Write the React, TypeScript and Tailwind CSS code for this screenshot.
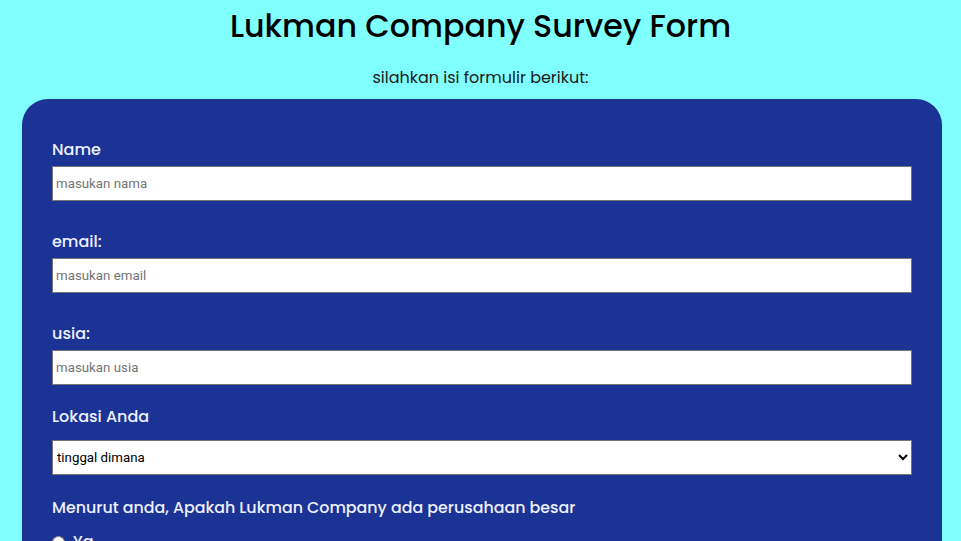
export default function App() {
  const fields = [
    { label: "Name", placeholder: "masukan nama" },
    { label: "email:", placeholder: "masukan email" },
    { label: "usia:", placeholder: "masukan usia" },
  ];

  return (
    <div className="min-h-screen bg-[#80ffff] font-['Poppins','Inter',sans-serif] text-black">
      <h1 className="pt-[6px] text-center text-[31.7px] font-medium leading-[40px]">
        Lukman Company Survey Form
      </h1>
      <p className="mt-[20px] text-center text-[16px] leading-[24px] text-[#1a1a1a]">
        silahkan isi formulir berikut:
      </p>
      <form className="ml-[22px] mr-[19px] mt-[9px] rounded-t-[26px] bg-[#1b3394] px-[30px] pt-[39px] pb-[40px] text-[#eef0ff]">
        {fields.map((f, i) => (
          <div key={f.label} className={i > 0 ? "mt-[29px]" : ""}>
            <label className="block text-[16px] font-medium leading-[24px]">{f.label}</label>
            <input
              type="text"
              placeholder={f.placeholder}
              className="mt-[4px] block h-[35px] w-full border border-[#767676] bg-white px-[3px] font-['Roboto',sans-serif] text-[13.3px] text-black placeholder:text-[#757575] outline-none"
            />
          </div>
        ))}
        <div className="mt-[20px]">
          <label className="block text-[16px] font-medium leading-[24px]">Lokasi Anda</label>
          <select className="mt-[11px] block h-[35px] w-full border border-[#767676] bg-white font-['Roboto',sans-serif] text-[13.3px] text-black">
            <option>tinggal dimana</option>
            <option>Jakarta</option>
            <option>Bandung</option>
            <option>Surabaya</option>
          </select>
        </div>
        <p className="mt-[21px] text-[15.85px] font-medium leading-[24px]">
          Menurut anda, Apakah Lukman Company ada perusahaan besar
        </p>
        <div className="mt-[10px] flex flex-col gap-2 text-[16px] font-medium">
          <label className="flex items-center gap-2">
            <input type="radio" name="besar" />
            Ya
          </label>
          <label className="flex items-center gap-2">
            <input type="radio" name="besar" />
            Tidak
          </label>
        </div>
      </form>
    </div>
  );
}
